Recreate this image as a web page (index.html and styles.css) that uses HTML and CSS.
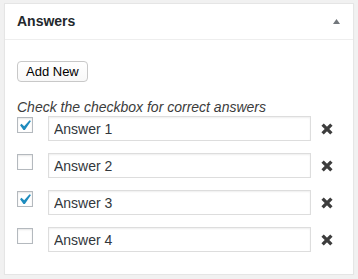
FILE: index.html
```html
<!DOCTYPE html>
<html>
<head>
<meta charset="utf-8">
<link rel="stylesheet" href="styles.css">
</head>
<body>
<div class="postbox">
  <div class="hndle">
    <h2 class="title">Answers</h2>
    <svg class="toggle" width="7" height="5" viewBox="0 0 7 5"><polygon points="0,5 3.5,0 7,5" fill="#72777c"/></svg>
  </div>
  <div class="inside">
    <button class="button">Add New</button>
    <p class="desc">Check the checkbox for correct answers</p>
    <div class="answers">
      <div class="row">
        <span class="cb"><svg width="14" height="14" viewBox="3.81 2.857 13.33 13.33"><path d="M14.83 4.89l1.34.94-5.81 8.38H9.02L5.78 9.67l1.34-1.25 2.57 2.4z" fill="#1e8cbe"/></svg></span>
        <input class="field" type="text" value="Answer 1">
        <span class="del"><svg width="12" height="12" viewBox="0 0 12 12"><path d="M1.6 1.6L10.4 10.4M10.4 1.6L1.6 10.4" stroke="#3d3d3d" stroke-width="3.3" fill="none"/></svg></span>
      </div>
      <div class="row">
        <span class="cb"></span>
        <input class="field" type="text" value="Answer 2">
        <span class="del"><svg width="12" height="12" viewBox="0 0 12 12"><path d="M1.6 1.6L10.4 10.4M10.4 1.6L1.6 10.4" stroke="#3d3d3d" stroke-width="3.3" fill="none"/></svg></span>
      </div>
      <div class="row">
        <span class="cb"><svg width="14" height="14" viewBox="3.81 2.857 13.33 13.33"><path d="M14.83 4.89l1.34.94-5.81 8.38H9.02L5.78 9.67l1.34-1.25 2.57 2.4z" fill="#1e8cbe"/></svg></span>
        <input class="field" type="text" value="Answer 3">
        <span class="del"><svg width="12" height="12" viewBox="0 0 12 12"><path d="M1.6 1.6L10.4 10.4M10.4 1.6L1.6 10.4" stroke="#3d3d3d" stroke-width="3.3" fill="none"/></svg></span>
      </div>
      <div class="row">
        <span class="cb"></span>
        <input class="field" type="text" value="Answer 4">
        <span class="del"><svg width="12" height="12" viewBox="0 0 12 12"><path d="M1.6 1.6L10.4 10.4M10.4 1.6L1.6 10.4" stroke="#3d3d3d" stroke-width="3.3" fill="none"/></svg></span>
      </div>
    </div>
  </div>
</div>
</body>
</html>
```
FILE: styles.css
```css
html, body {
  margin: 0;
  background: #f1f1f1;
}
body {
  padding: 3px 4px 0;
  font-family: "Liberation Sans", Arial, sans-serif;
  color: #444;
}
.postbox {
  background: #fff;
  border: 1px solid #e5e5e5;
  box-shadow: 0 1px 1px rgba(0,0,0,.04);
}
.hndle {
  display: flex;
  align-items: center;
  justify-content: space-between;
  padding: 8px 13px 8px 12px;
  border-bottom: 1px solid #eee;
}
.title {
  margin: 0;
  font-size: 14px;
  line-height: 19px;
  font-weight: bold;
  color: #23282d;
}
.toggle {
  display: block;
}
.inside {
  padding: 21px 12px 22px;
}
.button {
  display: block;
  margin: 0;
  height: 21px;
  padding: 0 8px;
  font-family: "Liberation Sans", Arial, sans-serif;
  font-size: 13px;
  line-height: 19px;
  color: #000;
  background: linear-gradient(#fff, #f8f8f8);
  border: 1px solid #c8c8c8;
  border-radius: 4px;
}
.desc {
  margin: 16px 0 0;
  font-size: 14px;
  line-height: 18px;
  font-style: italic;
  color: #3c3c3c;
}
.answers {
  display: flex;
  flex-direction: column;
  gap: 12px;
}
.row {
  display: flex;
  align-items: flex-start;
}
.cb {
  box-sizing: border-box;
  width: 16px;
  height: 16px;
  margin-top: 1px;
  margin-right: 15px;
  border: 1px solid #b4b9be;
  background: #fff;
  box-shadow: inset 0 1px 2px rgba(0,0,0,.1);
  flex: none;
}
.cb svg {
  display: block;
}
.field {
  box-sizing: border-box;
  flex: 1;
  min-width: 0;
  height: 25px;
  margin: 0;
  padding: 0 5px;
  font-family: "Liberation Sans", Arial, sans-serif;
  font-size: 14px;
  color: #32373c;
  border: 1px solid #ddd;
  box-shadow: inset 0 1px 2px rgba(0,0,0,.07);
  background: #fff;
  outline: none;
}
.del {
  flex: none;
  width: 20px;
  height: 25px;
  padding-left: 10px;
  display: flex;
  align-items: center;
}
.del svg {
  display: block;
}
```
